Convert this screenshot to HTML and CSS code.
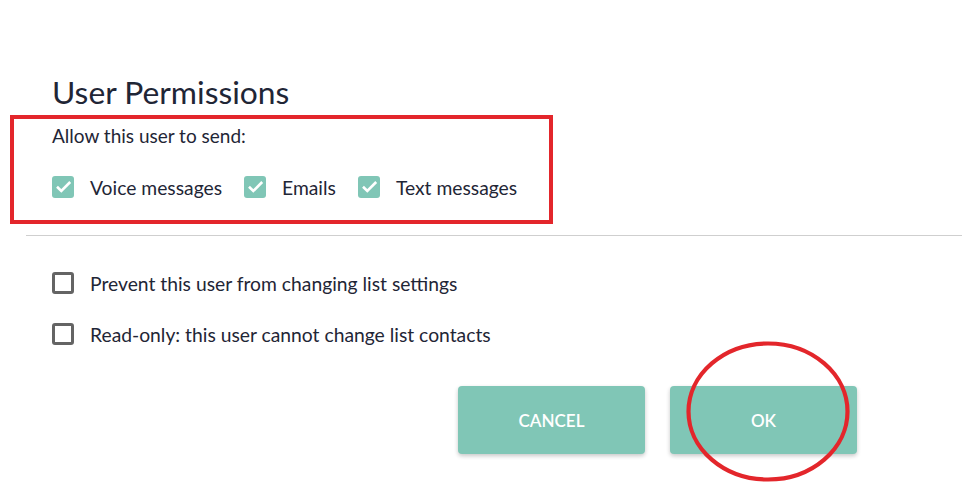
FILE: index.html
```html
<!DOCTYPE html>
<html lang="en">

<head>
    <meta charset="UTF-8">
    <meta name="viewport" content="width=device-width, initial-scale=1.0">
    <title>User Permissions</title>
    <link rel="stylesheet" href="styles.css">
</head>

<body>
    <main class="permissions">
        <h1>User Permissions</h1>

        <section class="send-box">
            <p class="send-title">Allow this user to send:</p>
            <div class="send-options">
                <label class="check-item">
                    <span class="box checked">
                        <svg viewBox="0 0 22 22"><path d="M5 10.8 L9.3 15 L18.2 6" /></svg>
                    </span>
                    Voice messages
                </label>
                <label class="check-item">
                    <span class="box checked">
                        <svg viewBox="0 0 22 22"><path d="M5 10.8 L9.3 15 L18.2 6" /></svg>
                    </span>
                    Emails
                </label>
                <label class="check-item">
                    <span class="box checked">
                        <svg viewBox="0 0 22 22"><path d="M5 10.8 L9.3 15 L18.2 6" /></svg>
                    </span>
                    Text messages
                </label>
            </div>
        </section>

        <hr class="divider">

        <div class="restrictions">
            <label class="check-item">
                <span class="box"></span>
                Prevent this user from changing list settings
            </label>
            <label class="check-item">
                <span class="box"></span>
                Read-only: this user cannot change list contacts
            </label>
        </div>

        <div class="actions">
            <button class="btn">CANCEL</button>
            <button class="btn">OK</button>
            <!-- annotation circle around OK -->
            <svg class="mark" viewBox="0 0 164 141">
                <ellipse cx="82" cy="70.5" rx="79.5" ry="68" />
            </svg>
        </div>
    </main>
</body>

</html>
```

FILE: styles.css
```css
:root {
    --accent: #80c6b6;
    --text: #1f2636;
    --mark: #e3262b;
}

body {
    margin: 0;
    background: #fff;
    font-family: Lato, "Liberation Sans", sans-serif;
    color: var(--text);
}

.permissions {
    padding: 73px 0 40px;
}

h1 {
    margin: 0 0 4px 52px;
    font-size: 31.8px;
    font-weight: 400;
    line-height: 38px;
}

.send-box {
    box-sizing: border-box;
    width: 543px;
    height: 109px;
    margin-left: 10px;
    padding: 5px 0 0 38px;
    border: 4.5px solid var(--mark);
}

.send-title {
    margin: 0;
    font-size: 19px;
    line-height: 24px;
}

.send-options {
    display: flex;
    gap: 22px;
    margin-top: 27px;
}

.check-item {
    display: flex;
    align-items: center;
    gap: 16px;
    height: 24px;
    font-size: 19.3px;
}

.box {
    box-sizing: border-box;
    flex: none;
    width: 22px;
    height: 22px;
    border: 3px solid #646464;
    border-radius: 3px;
}

.box.checked {
    border: none;
    background: var(--accent);
}

.box svg {
    display: block;
    width: 22px;
    height: 22px;
    fill: none;
    stroke: #fff;
    stroke-width: 2.6;
}

.divider {
    margin: 11px 0 0 26px;
    border: none;
    border-top: 1px solid #cfcfcf;
}

.restrictions {
    display: flex;
    flex-direction: column;
    gap: 27px;
    margin: 35px 0 0 52px;
}

.actions {
    position: relative;
    display: flex;
    justify-content: flex-end;
    gap: 25px;
    margin-top: 40px;
    padding-right: 105px;
}

.btn {
    width: 187px;
    height: 68px;
    border: none;
    border-radius: 4px;
    background: var(--accent);
    color: #fff;
    font-family: Lato, "Liberation Sans", sans-serif;
    font-size: 17px;
    font-weight: 600;
    box-shadow: 0 2px 4px rgba(0, 0, 0, 0.22);
}

.mark {
    position: absolute;
    left: 686px;
    top: -45px;
    width: 164px;
    height: 141px;
    fill: none;
    stroke: var(--mark);
    stroke-width: 4.2;
}
```
